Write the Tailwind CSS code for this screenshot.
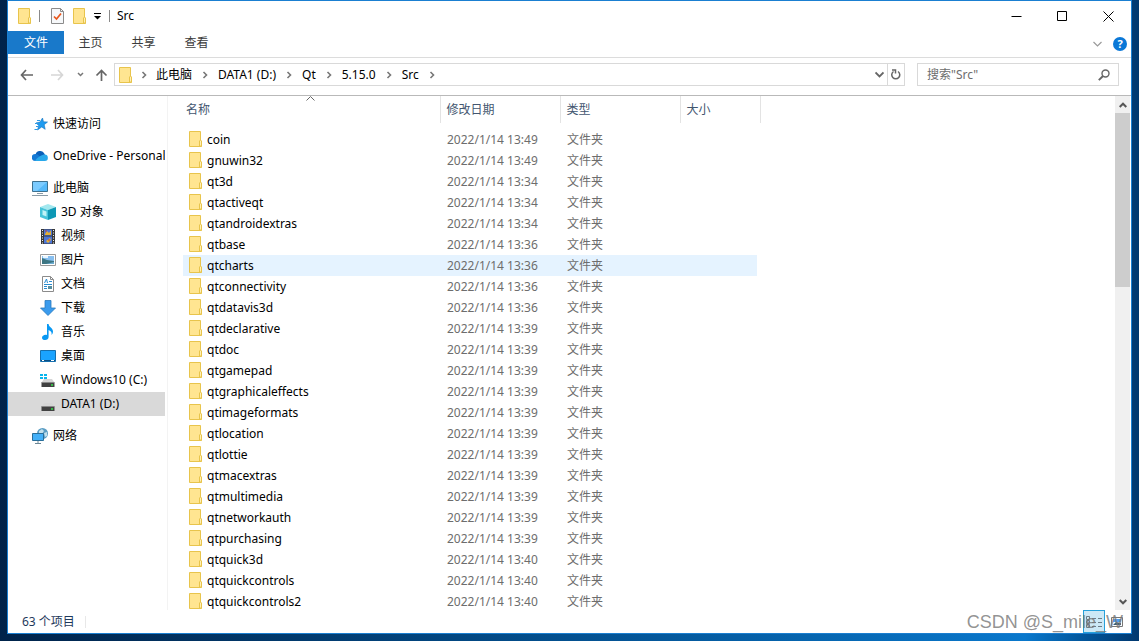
<!DOCTYPE html>
<html lang="zh-CN">
<head>
    <meta charset="UTF-8">
    <meta name="viewport" content="width=device-width, initial-scale=1.0">
    <title>Src</title>
    <script src="https://cdn.jsdelivr.net/npm/@tailwindcss/browser@4"></script>
</head>
<body class="font-['Noto_Sans','Noto_Sans_CJK_SC',sans-serif] text-xs leading-5 text-black">
<svg class="hidden">
    <symbol id="folder" viewBox="0 0 13 16">
        <path d="M.5.5h11v9l1 1v5H.5z" fill="#ffe591" stroke="#e8c44c"/>
        <path d="M10.500 15v-5l1-1 1 1v5z" fill="#fff0b5" stroke="#e8c44c"/>
    </symbol>
    <symbol id="chev" viewBox="0 0 6 8">
        <path d="M1.500 1l3 3-3 3" fill="none" stroke="#777" stroke-width="1.600"/>
    </symbol>
    <symbol id="drive" viewBox="0 0 16 16">
        <path d="M4 7h8l2.500 3.500h-13z" fill="#d5d5d5"/>
        <path d="M1.500 10.500h13V15h-13z" fill="#414141"/>
        <path d="M1.500 10.500h13" stroke="#888"/>
        <path d="M11 13h2" stroke="#33e04a" stroke-width="1.500"/>
    </symbol>
</svg>

<div class="flex h-screen flex-col overflow-hidden bg-linear-to-r from-[#00234a] via-[#0a78cc] via-90% to-[#00386f] px-[7px] pb-[7px]">
    <div class="relative flex min-h-0 flex-1 flex-col border border-[#1a7fd1] bg-white">

        <!-- Title bar -->
        <header class="flex h-[30px] shrink-0 items-center pl-[10px]">
            <svg class="h-4 w-[13px]"><use href="#folder"/></svg>
            <span class="ml-2 h-3 w-px bg-[#8a8a8a]"></span>
            <button class="ml-[11px]" aria-label="属性">
                <svg class="h-4 w-[13px]" viewBox="0 0 13 16" fill="none">
                    <path d="M.5.5h9l3 3v12H.5z" fill="#f6f8fa" stroke="#8b8b8b"/>
                    <path d="M9.500.5v3h3" stroke="#8b8b8b"/>
                    <path d="M3 8.500l2.500 2.500L10 5.500" stroke="#e8561c" stroke-width="1.700"/>
                </svg>
            </button>
            <button class="ml-[9px]" aria-label="新建文件夹"><svg class="h-4 w-[13px]"><use href="#folder"/></svg></button>
            <button class="ml-2" aria-label="自定义快速访问工具栏">
                <svg class="h-[7px] w-[7px]" viewBox="0 0 7 7"><path d="M0 .5h7" stroke="#000"/><path d="M0 3h7L3.500 6.500z"/></svg>
            </button>
            <span class="ml-2 h-3 w-px bg-[#8a8a8a]"></span>
            <h1 class="ml-[7px]">Src</h1>
            <div class="ml-auto flex">
                <button class="grid h-[30px] w-[46px] place-items-center" aria-label="最小化"><svg class="h-[11px] w-[11px]" viewBox="0 0 11 11"><path d="M.5 5.500h10" stroke="#000"/></svg></button>
                <button class="grid h-[30px] w-[46px] place-items-center" aria-label="最大化"><svg class="h-[11px] w-[11px]" viewBox="0 0 11 11"><path d="M.5.5h9v9h-9z" fill="none" stroke="#000"/></svg></button>
                <button class="grid h-[30px] w-[46px] place-items-center" aria-label="关闭"><svg class="h-[11px] w-[11px]" viewBox="0 0 11 11"><path d="M.5.5l10 10M10.500.5l-10 10" stroke="#000"/></svg></button>
            </div>
        </header>

        <!-- Ribbon tabs -->
        <nav class="flex h-[27px] shrink-0 items-start border-b border-[#dcdcdc] leading-[23px] text-[#3b3b3b]">
            <button class="w-14 bg-[#1979ca] text-white">文件</button>
            <button class="w-[53px]">主页</button>
            <button class="w-[53px]">共享</button>
            <button class="w-[53px]">查看</button>
            <button class="mt-[10px] ml-auto" aria-label="展开功能区"><svg class="h-[6px] w-[9px]" viewBox="0 0 9 6"><path d="M.5 1l4 4 4-4" fill="none" stroke="#9a9a9a" stroke-width="1.200"/></svg></button>
            <button class="mt-[6px] mr-1 ml-[11px] h-[14px] w-[14px] rounded-full bg-[#0b78d7] text-[11px] leading-[14px] font-bold text-white" aria-label="帮助">?</button>
        </nav>

        <!-- Address bar -->
        <div class="flex h-[38px] shrink-0 items-center border-b border-[#b9b9b9] px-3 pb-1">
            <button aria-label="后退"><svg class="h-3 w-[13px]" viewBox="0 0 13 12" fill="none" stroke="#666" stroke-width="1.700"><path d="M13 6H2M6 1L1.500 6 6 11"/></svg></button>
            <button class="ml-[18px]" aria-label="前进"><svg class="h-3 w-[13px]" viewBox="0 0 13 12" fill="none" stroke="#d6d6d6" stroke-width="1.700"><path d="M0 6h11M7 1l4.500 5L7 11"/></svg></button>
            <button class="ml-[13px]" aria-label="最近浏览的位置"><svg class="h-[5px] w-[7px]" viewBox="0 0 7 5" fill="none" stroke="#777" stroke-width="1.500"><path d="M1 1l2.500 2.500L6 1"/></svg></button>
            <button class="ml-[11px]" aria-label="上移"><svg class="h-3 w-[13px]" viewBox="0 0 13 12" fill="none" stroke="#666" stroke-width="1.700"><path d="M6.500 12V1.500M1.500 6.500l5-5 5 5"/></svg></button>
            <div class="ml-[6px] flex h-[23px] flex-1 items-center border border-[#d9d9d9] pl-1">
                <svg class="h-4 w-[13px]"><use href="#folder"/></svg>
                <svg class="mx-[9px] h-2 w-[6px]"><use href="#chev"/></svg>
                <a href="#">此电脑</a>
                <svg class="mx-[10px] h-2 w-[6px]"><use href="#chev"/></svg>
                <a href="#">DATA1 (D:)</a>
                <svg class="mx-[10px] h-2 w-[6px]"><use href="#chev"/></svg>
                <a href="#">Qt</a>
                <svg class="mx-[10px] h-2 w-[6px]"><use href="#chev"/></svg>
                <a href="#">5.15.0</a>
                <svg class="mx-[10px] h-2 w-[6px]"><use href="#chev"/></svg>
                <a href="#">Src</a>
                <svg class="mx-[10px] h-2 w-[6px]"><use href="#chev"/></svg>
                <button class="mr-[3px] ml-auto" aria-label="以前的位置"><svg class="h-[7px] w-[9px]" viewBox="0 0 9 7" fill="none" stroke="#666" stroke-width="1.800"><path d="M.5 1.500l4 4 4-4"/></svg></button>
                <button class="grid h-full w-[17px] place-items-center border-l border-[#d9d9d9]" aria-label="刷新">
                    <svg class="h-[11px] w-[10px]" viewBox="0 0 10 11" fill="none" stroke="#666" stroke-width="1.500"><path d="M7 2.500A4 4 0 1 1 2.500 2.500M1 1h3.500v3.500"/></svg>
                </button>
            </div>
            <label class="ml-3 flex h-[23px] w-[202px] items-center border border-[#d9d9d9] pr-2 pl-[9px]">
                <input type="text" placeholder="搜索&quot;Src&quot;" aria-label="搜索" class="min-w-0 flex-1 outline-none placeholder:text-[#6d6d6d]">
                <svg class="h-3 w-3" viewBox="0 0 12 12" fill="none" stroke="#666"><circle cx="7.500" cy="4.500" r="3.500" stroke-width="1.400"/><path d="M5 7L.8 11.200" stroke-width="1.900"/></svg>
            </label>
        </div>

        <main class="flex min-h-0 flex-1">
            <!-- Navigation pane -->
            <nav id="tree" class="w-[160px] shrink-0 overflow-hidden border-r border-[#f3f3f3] pt-4 pr-[2px] leading-6 whitespace-nowrap">
                <a href="#" class="flex h-6 items-center gap-[5px] overflow-hidden pl-6">
                    <svg class="h-4 w-4 shrink-0" viewBox="0 0 16 16"><path d="M10.500 2l1 3.800 4 .2-3.300 2.700 1 4.600L9.700 11 5.500 14l1.200-4.500L4 6.900l4-.8z" fill="#1e9bf0" stroke="#1474c0" stroke-width=".6"/><path d="M5 4.500h3M3 7.500h3M4 10.500h2M2.500 13.500h3" stroke="#2f9be6"/></svg>快速访问</a>
                <a href="#" class="mt-2 flex h-6 items-center gap-[5px] overflow-hidden pl-6">
                    <svg class="h-4 w-4 shrink-0" viewBox="0 0 16 16"><path d="M3.500 7A4.700 4.700 0 0 1 12 5l1.500 3-9 2z" fill="#0a5fb8"/><path d="M3.500 13a3.500 3.500 0 0 1-.5-7 4 4 0 0 1 3 .8l5 5z" fill="#1479d4"/><path d="M3.500 13h9.300a3.200 3.200 0 0 0-.3-6.400c-1.800 0-7.300 2.600-9.500 6.300z" fill="#28a8ea"/></svg>OneDrive - Personal</a>
                <a href="#" class="mt-2 flex h-6 items-center gap-[5px] overflow-hidden pl-6">
                    <svg class="h-4 w-4 shrink-0" viewBox="0 0 16 16"><path d="M.5 1.500h15v10H.5z" fill="#55b9fa" stroke="#3d7190"/><path d="M1 2h14L5 11H1z" fill="#7bcbff"/><path d="M5 13.500h6M0 15.500h16" stroke="#8a9ba6"/></svg>此电脑</a>
                <a href="#" class="flex h-6 items-center gap-[5px] overflow-hidden pl-8">
                    <svg class="h-4 w-4 shrink-0" viewBox="0 0 16 16"><path d="M0 3l8-3 8 3-8 3z" fill="#a3e8ef"/><path d="M0 3l8 3v10l-8-3z" fill="#47c4d9"/><path d="M8 6l8-3v10l-8 3z" fill="#0d98b5"/><path d="M2.500 6l4 1.500v5l-4-1.500z" fill="#c0f3f6"/></svg>3D 对象</a>
                <a href="#" class="flex h-6 items-center gap-[5px] overflow-hidden pl-8">
                    <svg class="h-4 w-4 shrink-0" viewBox="0 0 16 16"><path d="M1 1h14v15H1z" fill="#393939"/><path d="M4 1.500h8v6H4zM4 8.500h8v7H4z" fill="#4c76d9"/><path d="M2.500 2v14M13.500 2v14" stroke="#eee" stroke-dasharray="1 1.500"/><path d="M5 6l2-3 2 2 2-3v5H5zM6 13l4-3 1 2-3 3z" fill="#e4af36"/><path d="M5 3h2M8 12h2" stroke="#b64246"/></svg>视频</a>
                <a href="#" class="flex h-6 items-center gap-[5px] overflow-hidden pl-8">
                    <svg class="h-4 w-4 shrink-0" viewBox="0 0 16 16"><path d="M.5 2.500h15v11H.5z" fill="#fff" stroke="#999"/><path d="M2 4h12v8H2z" fill="#87bff0"/><path d="M2 6l5 2 7 1v3H2z" fill="#3d7683"/><path d="M6 12l8-2v2z" fill="#6daed4"/><path d="M3 5h5" stroke="#e8f6ff" stroke-width="2"/></svg>图片</a>
                <a href="#" class="flex h-6 items-center gap-[5px] overflow-hidden pl-8">
                    <svg class="h-4 w-4 shrink-0" viewBox="0 0 16 16"><path d="M2.500.5h8l3 3v12h-11z" fill="#fff" stroke="#8b8b8b"/><path d="M10.500.5v3h3" fill="none" stroke="#8b8b8b"/><path d="M4.500 7l2-4 1 4M9 5.500h3M4 8.500h8M4 10.500h3M4 12.500h3" fill="none" stroke="#298bd0"/><path d="M8 10h4v3H8z" fill="#568d9d"/></svg>文档</a>
                <a href="#" class="flex h-6 items-center gap-[5px] overflow-hidden pl-8">
                    <svg class="h-4 w-4 shrink-0" viewBox="0 0 16 16"><path d="M5 .5h6v7.500h4.500L8 15.500.5 8H5z" fill="#3a9bed" stroke="#2879bd" stroke-width=".8"/></svg>下载</a>
                <a href="#" class="flex h-6 items-center gap-[5px] overflow-hidden pl-8">
                    <svg class="h-4 w-4 shrink-0" viewBox="0 0 16 16"><path d="M7 0h1.600c0 3 4.400 3.800 4.400 7.500 0 1.500-.6 2.500-1.500 3.500.6-3-.9-4-2.900-5v7c0 1.800-1.600 3-3.400 3S2 15.200 2 13.700s1.700-2.900 3.600-2.900c.5 0 1 .1 1.400.3z" fill="#0898f3"/></svg>音乐</a>
                <a href="#" class="flex h-6 items-center gap-[5px] overflow-hidden pl-8">
                    <svg class="h-4 w-4 shrink-0" viewBox="0 0 16 16"><path d="M.5 2.500h15v11H.5z" fill="#1aa3ff" stroke="#156fae"/><path d="M1 12.500h14" stroke="#0b4d81"/><path d="M2 12.500h2M11 12.500h3" stroke="#fff"/></svg>桌面</a>
                <a href="#" class="flex h-6 items-center gap-[5px] overflow-hidden pl-8">
                    <svg class="h-4 w-4 shrink-0" viewBox="0 0 16 16"><use href="#drive"/><path d="M0 2h3v2H0zM4 2h3v2H4zM0 5h3v2H0zM4 5h3v2H4z" fill="#08b5ed"/></svg>Windows10 (C:)</a>
                <a href="#" class="flex h-6 items-center gap-[5px] overflow-hidden bg-[#d9d9d9] pl-8">
                    <svg class="h-4 w-4 shrink-0"><use href="#drive"/></svg>DATA1 (D:)</a>
                <a href="#" class="mt-2 flex h-6 items-center gap-[5px] overflow-hidden pl-6">
                    <svg class="h-4 w-4 shrink-0" viewBox="0 0 16 16"><circle cx="10.500" cy="5.500" r="5.500" fill="#5a9dc4"/><path d="M7 3l3-2 2 2-2 3-3 1zM12 5l3-1v4l-2 1z" fill="#c2dfeb"/><path d="M.5 5.500h11v7H.5z" fill="#43b0f8" stroke="#2a6e99"/><path d="M6 13v2M3 15.500h6" stroke="#6c8796"/></svg>网络</a>
            </nav>

            <!-- File list -->
            <section class="min-w-0 flex-1 overflow-hidden pl-[15px]">
                <table class="w-[577px] table-fixed border-collapse text-left">
                    <colgroup>
                        <col class="w-[257px]"><col class="w-[120px]"><col class="w-[120px]"><col class="w-[77px]"><col class="w-[3px]">
                    </colgroup>
                    <thead class="text-[#43566f]">
                        <tr class="h-[27px]">
                            <th class="relative border-r border-[#e3e3e3] p-0 pl-[3px] font-normal">名称
                                <svg class="absolute top-0 left-[123px] h-[5px] w-[9px]" viewBox="0 0 9 5" fill="none" stroke="#666"><path d="M.5 4.500l4-4 4 4"/></svg>
                            </th>
                            <th class="border-r border-[#e3e3e3] p-0 pl-[6px] font-normal">修改日期</th>
                            <th class="border-r border-[#e3e3e3] p-0 pl-[6px] font-normal">类型</th>
                            <th colspan="2" class="border-r border-[#e3e3e3] p-0 pl-[6px] font-normal">大小</th>
                        </tr>
                    </thead>
                    <tbody id="files" class="leading-[21px] before:block before:h-[6px]"></tbody>
                </table>
            </section>

            <!-- Scrollbar -->
            <div class="mr-px flex w-[15px] shrink-0 flex-col bg-[#f0f0f0]">
                <button class="grid h-[17px] place-items-center" aria-label="向上滚动"><svg class="h-[6px] w-2" viewBox="0 0 8 6" fill="none" stroke="#555" stroke-width="2"><path d="M.7 5L4 1.700 7.300 5"/></svg></button>
                <div class="h-[174px] bg-[#cdcdcd]"></div>
                <button class="mt-auto grid h-[17px] place-items-center" aria-label="向下滚动"><svg class="h-[6px] w-2" viewBox="0 0 8 6" fill="none" stroke="#555" stroke-width="2"><path d="M.7 1L4 4.300 7.300 1"/></svg></button>
            </div>
        </main>

        <!-- Status bar -->
        <footer class="flex h-[23px] shrink-0 items-center pl-[14px] text-[#1e395b]">
            <span>63 个项目</span>
            <span class="ml-[10px] h-3 w-px bg-[#e8e8e8]"></span>
            <button class="ml-auto grid h-[23px] w-[22px] place-items-center border border-[#26a0da] bg-[#cce8f6]" aria-label="详细信息">
                <svg class="h-3 w-4" viewBox="0 0 16 12" fill="none" stroke="#6b7c88"><path d="M.5.5h3v3h-3zM.5 4.500h3v3h-3zM.5 8.500h3v3h-3zM6 2.500h4M6 6.500h4M6 10.500h4M12 2.500h4M12 6.500h4M12 10.500h4"/></svg>
            </button>
            <button class="mr-2 ml-[6px]" aria-label="大图标"><svg class="h-[10px] w-3" viewBox="0 0 12 10"><path d="M.5.5h11v9H.5z" fill="#fff" stroke="#777"/><path d="M2 2h8v3H2z" fill="#4f9ff0"/><path d="M2 8l3-3 5 1v2z" fill="#3f5f75"/></svg></button>
        </footer>

        <div class="pointer-events-none absolute right-2 -bottom-px font-['Liberation_Sans',sans-serif] text-[18px] leading-6 text-[#777]/80">CSDN @S_mile_W</div>
    </div>
</div>

<script>
const files = [
    ['coin', '13:49'], ['gnuwin32', '13:49'], ['qt3d', '13:34'], ['qtactiveqt', '13:34'],
    ['qtandroidextras', '13:34'], ['qtbase', '13:36'], ['qtcharts', '13:36'], ['qtconnectivity', '13:36'],
    ['qtdatavis3d', '13:36'], ['qtdeclarative', '13:39'], ['qtdoc', '13:39'], ['qtgamepad', '13:39'],
    ['qtgraphicaleffects', '13:39'], ['qtimageformats', '13:39'], ['qtlocation', '13:39'], ['qtlottie', '13:39'],
    ['qtmacextras', '13:39'], ['qtmultimedia', '13:39'], ['qtnetworkauth', '13:39'], ['qtpurchasing', '13:39'],
    ['qtquick3d', '13:40'], ['qtquickcontrols', '13:40'], ['qtquickcontrols2', '13:40']
];

document.getElementById('files').innerHTML = files.map(([name, time]) => {
    const bg = name === 'qtcharts' ? 'bg-[#e5f3ff]' : '';
    return `<tr class="h-[21px] align-top">
        <td class="p-0 pl-[6px] ${bg}"><div class="flex gap-[5px]"><svg class="mt-[2px] h-4 w-[13px]"><use href="#folder"/></svg>${name}</div></td>
        <td class="p-0 pl-[7px] text-[#6d6d6d] ${bg}">2022/1/14 ${time}</td>
        <td class="p-0 pl-[7px] text-[#6d6d6d] ${bg}">文件夹</td>
        <td class="p-0 ${bg}"></td>
        <td class="p-0"></td>
    </tr>`;
}).join('');
</script>
</body>
</html>
